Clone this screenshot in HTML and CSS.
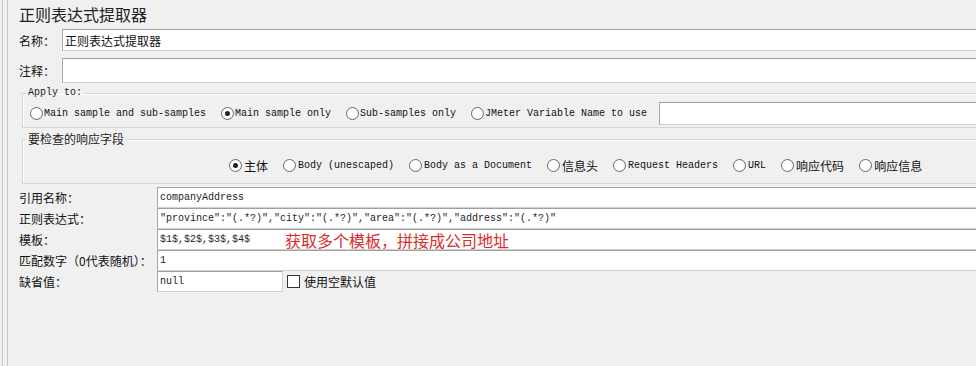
FILE: index.html
```html
<!DOCTYPE html>
<html lang="zh-CN">
<head>
  <meta charset="UTF-8" />
  <title>正则表达式提取器</title>
  <link rel="stylesheet" href="styles.css">
</head>
<body>
  <div class="frame">
    <div class="inner">
      <div class="title">正则表达式提取器</div>

      <div class="row name-row">
        <label>名称：</label>
        <div class="input cjk">正则表达式提取器</div>
      </div>
      <div class="row comment-row">
        <label>注释：</label>
        <div class="input"></div>
      </div>

      <fieldset class="group apply">
        <legend class="mono">Apply to:</legend>
        <div class="radios">
          <span class="opt mono"><span class="radio"></span>Main sample and sub-samples</span>
          <span class="opt mono"><span class="radio on"></span>Main sample only</span>
          <span class="opt mono"><span class="radio"></span>Sub-samples only</span>
          <span class="opt mono"><span class="radio"></span>JMeter Variable Name to use</span>
          <div class="input var-input"></div>
        </div>
      </fieldset>

      <fieldset class="group checks">
        <legend>要检查的响应字段</legend>
        <div class="radios">
          <span class="opt"><span class="radio on"></span>主体</span>
          <span class="opt mono"><span class="radio"></span>Body (unescaped)</span>
          <span class="opt mono"><span class="radio"></span>Body as a Document</span>
          <span class="opt"><span class="radio"></span>信息头</span>
          <span class="opt mono"><span class="radio"></span>Request Headers</span>
          <span class="opt mono"><span class="radio"></span>URL</span>
          <span class="opt"><span class="radio"></span>响应代码</span>
          <span class="opt"><span class="radio"></span>响应信息</span>
        </div>
      </fieldset>

      <div class="form">
        <label>引用名称：</label>
        <div class="input">companyAddress</div>

        <label>正则表达式：</label>
        <div class="input">"province":"(.*?)","city":"(.*?)","area":"(.*?)","address":"(.*?)"</div>

        <label>模板：</label>
        <div class="input">$1$,$2$,$3$,$4$<span class="note">获取多个模板，拼接成公司地址</span></div>

        <label>匹配数字（0代表随机）：</label>
        <div class="input">1</div>

        <label>缺省值：</label>
        <div class="default-cell">
          <div class="input short">null</div>
          <span class="checkbox"></span>
          <span class="check-label">使用空默认值</span>
        </div>
      </div>
    </div>
  </div>
</body>
</html>
```

FILE: styles.css
```css
body {
  margin: 0;
  background-color: #f0f0f0;
  overflow: hidden;
  font-family: "Noto Sans CJK SC", "Noto Sans", sans-serif;
  font-size: 12px;
  color: #111;
}

.mono {
  font-family: "Liberation Mono", "Noto Sans CJK SC", monospace;
  font-size: 10px;
}

.frame {
  margin-left: 2px;
  border-left: 1px solid #c6c6c6;
  height: 366px;
  width: 1200px;
}

.inner {
  margin-left: 4px;
  border-left: 1px solid #c6c6c6;
  height: 100%;
}

.title {
  height: 28px;
  line-height: 28px;
  font-size: 16px;
  padding-left: 11px;
  color: #222;
}

.row {
  display: flex;
  align-items: center;
  padding-left: 11px;
}

.row label {
  width: 43px;
}

.name-row {
  margin-top: 1px;
  height: 22px;
}

.comment-row {
  margin-top: 7px;
  height: 25px;
}

.input {
  box-sizing: border-box;
  height: 100%;
  flex: 1;
  display: flex;
  align-items: center;
  padding-left: 2px;
  background-color: #fff;
  border: 1px solid #d0d0d0;
  border-top-color: #a0a0a0;
  border-left-color: #a8a8a8;
  font-family: "Liberation Mono", monospace;
  font-size: 10px;
  color: #1c1c2c;
  white-space: nowrap;
}

.input.cjk {
  font-family: "Noto Sans CJK SC", sans-serif;
  font-size: 12px;
  color: #111;
}

.group {
  margin: 3px 0 0 14px;
  padding: 2px 0 2px 0;
  border: 1px solid #d4d4d4;
  box-shadow: inset 1px 1px 0 #fff;
  min-width: 0;
}

.group legend {
  line-height: 14px;
  margin-left: 3px;
  padding: 0 2px;
  color: #222;
}

.radios {
  display: flex;
  align-items: center;
}

.apply .radios {
  height: 23px;
  padding-left: 7px;
}

.checks {
  margin-top: 4px;
  padding: 9px 0 8px 0;
}

.checks .radios {
  height: 20px;
  padding-left: 206px;
}

.opt {
  display: flex;
  align-items: center;
  margin-right: 15px;
  white-space: nowrap;
}

.radio {
  box-sizing: border-box;
  width: 13px;
  height: 13px;
  margin-right: 2px;
  border: 1px solid #6a6a6a;
  border-radius: 50%;
  background: radial-gradient(circle at 40% 40%, #fff 50%, #e6e6e6);
  display: flex;
  align-items: center;
  justify-content: center;
}

.apply .radio {
  margin-right: 1px;
}

.radio.on::after {
  content: "";
  width: 5px;
  height: 5px;
  border-radius: 50%;
  background-color: #222;
}

.var-input {
  height: 23px;
  margin-left: -3px;
}

.form {
  margin-top: 3px;
  padding-left: 11px;
  display: grid;
  grid-template-columns: 138px 1fr;
  grid-auto-rows: 21px;
}

.form label {
  display: flex;
  align-items: center;
  white-space: nowrap;
}

.note {
  margin-left: 35px;
  font-family: "Noto Sans CJK SC", sans-serif;
  font-size: 16px;
  color: #e02a2a;
}

.default-cell {
  display: flex;
  align-items: center;
}

.input.short {
  flex: none;
  width: 126px;
}

.checkbox {
  box-sizing: border-box;
  width: 13px;
  height: 13px;
  margin-left: 4px;
  border: 1px solid #333;
  background-color: #fff;
}

.check-label {
  margin-left: 4px;
}
```
